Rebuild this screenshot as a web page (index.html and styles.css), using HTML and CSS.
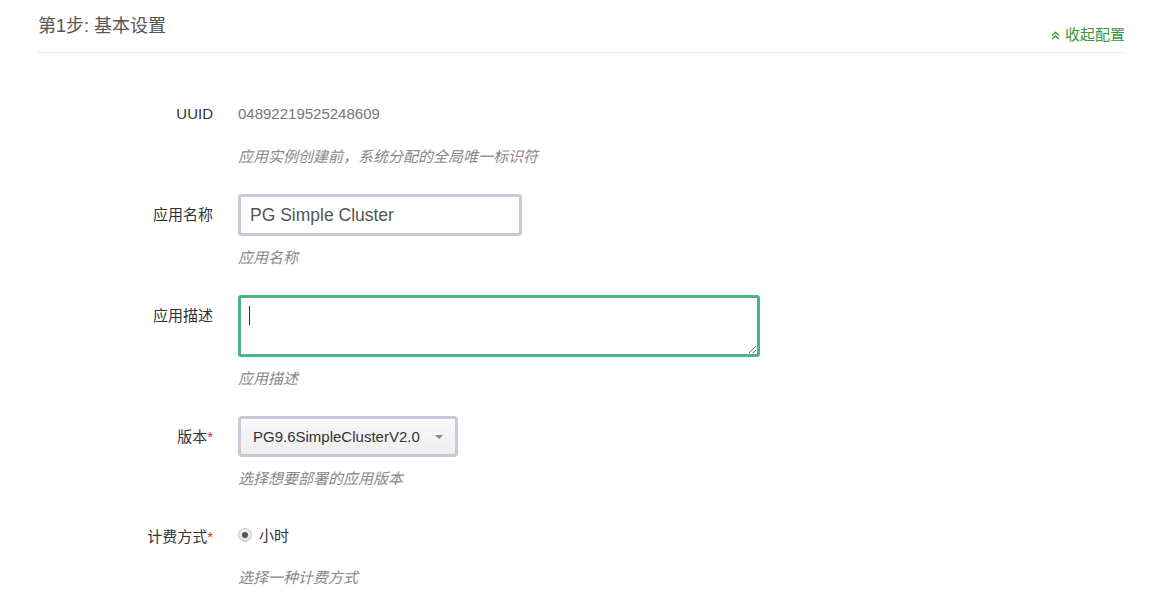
FILE: index.html
```html
<!DOCTYPE html>
<html lang="zh">
<head>
<meta charset="utf-8">
<title>第1步: 基本设置</title>
<link rel="stylesheet" href="styles.css">
</head>
<body>
<div class="page">
  <div class="step-header">
    <h3 class="step-title">第1步: 基本设置</h3>
    <a class="collapse-link" href="#">
      <svg class="chev" width="9" height="9" viewBox="0 0 9 9" aria-hidden="true">
        <path d="M1 4.5 L4.5 1.5 L8 4.5" fill="none" stroke="#3a963a" stroke-width="1.4"/>
        <path d="M1 8 L4.5 5 L8 8" fill="none" stroke="#3a963a" stroke-width="1.4"/>
      </svg>收起配置</a>
  </div>

  <form class="form">
    <div class="group">
      <label class="label">UUID</label>
      <div class="field">
        <div class="static">04892219525248609</div>
        <div class="help">应用实例创建前，系统分配的全局唯一标识符</div>
      </div>
    </div>

    <div class="group">
      <label class="label">应用名称</label>
      <div class="field">
        <input class="input" type="text" value="PG Simple Cluster">
        <div class="help">应用名称</div>
      </div>
    </div>

    <div class="group">
      <label class="label">应用描述</label>
      <div class="field">
        <div class="textarea-wrap">
          <textarea class="textarea"></textarea>
          <span class="caret"></span>
        </div>
        <div class="help">应用描述</div>
      </div>
    </div>

    <div class="group">
      <label class="label">版本<span class="req">*</span></label>
      <div class="field">
        <div class="select">
          <span class="select-text">PG9.6SimpleClusterV2.0</span>
          <span class="select-arrow"></span>
        </div>
        <div class="help">选择想要部署的应用版本</div>
      </div>
    </div>

    <div class="group">
      <label class="label">计费方式<span class="req">*</span></label>
      <div class="field">
        <div class="radio-row">
          <span class="radio"><span class="radio-dot"></span></span>
          <span class="radio-text">小时</span>
        </div>
        <div class="help">选择一种计费方式</div>
      </div>
    </div>
  </form>
</div>
</body>
</html>
```

FILE: styles.css
```css
* { box-sizing: border-box; }

html, body {
  margin: 0;
  padding: 0;
  background: #fff;
}

body {
  font-family: "Liberation Sans", Arial, "Noto Sans CJK SC", sans-serif;
  font-size: 15px;
  color: #333;
}

.page {
  padding: 14px 25px 0 38px;
}

.step-header {
  display: flex;
  justify-content: space-between;
  align-items: flex-end;
  padding-bottom: 7px;
  border-bottom: 1px solid #e8e8e8;
}

.step-title {
  margin: 0 0 7px 0;
  font-size: 18px;
  line-height: 24px;
  font-weight: normal;
  color: #555;
}

.collapse-link {
  display: flex;
  align-items: center;
  gap: 5px;
  font-size: 15px;
  line-height: 20px;
  color: #3a963a;
  text-decoration: none;
}

.chev { display: block; }

.form {
  padding-top: 40px;
}

.group {
  display: flex;
  margin-bottom: 26px;
}

.label {
  width: 175px;
  flex: none;
  text-align: right;
  line-height: 42px;
  height: 42px;
  color: #333;
}

.req {
  color: #c9302c;
}

.field {
  margin-left: 25px;
  display: flex;
  flex-direction: column;
  align-items: flex-start;
}

.static {
  height: 42px;
  line-height: 42px;
  color: #777;
}

.help {
  margin-top: 11px;
  line-height: 22px;
  font-style: italic;
  color: #888;
}

.input {
  width: 284px;
  height: 42px;
  border: 3px solid #cac8d8;
  border-radius: 4px;
  padding: 0 9px;
  font-family: "Liberation Sans", Arial, "Noto Sans CJK SC", sans-serif;
  font-size: 17.5px;
  color: #555;
  background: #fff;
  outline: none;
}

.textarea-wrap {
  position: relative;
}

.textarea {
  display: block;
  width: 522px;
  height: 62px;
  border: 3px solid #4cb482;
  border-radius: 3px;
  padding: 6px 9px;
  font-family: "Liberation Sans", Arial, "Noto Sans CJK SC", sans-serif;
  font-size: 15px;
  outline: none;
  background: #fff;
}

.caret {
  position: absolute;
  left: 11px;
  top: 11px;
  width: 1px;
  height: 19px;
  background: #333;
}

.select {
  display: flex;
  align-items: center;
  width: 220px;
  height: 41px;
  border: 3px solid #cac8d8;
  border-radius: 4px;
  padding: 0 12px 0 12px;
  background: linear-gradient(#fafafa, #eeeeee);
  color: #333;
}

.select-text {
  flex: 1;
}

.select-arrow {
  width: 0;
  height: 0;
  border-left: 4px solid transparent;
  border-right: 4px solid transparent;
  border-top: 4px solid #888;
}

.radio-row {
  display: flex;
  align-items: center;
  height: 40px;
  padding-bottom: 3px;
}

.radio {
  width: 14px;
  height: 14px;
  border-radius: 50%;
  border: 1px solid #c8c8c8;
  background: linear-gradient(#f4f4f4, #e2e2e2);
  display: flex;
  align-items: center;
  justify-content: center;
}

.radio-dot {
  width: 6px;
  height: 6px;
  border-radius: 50%;
  background: #555;
}

.radio-text {
  margin-left: 7px;
  color: #333;
}
```
